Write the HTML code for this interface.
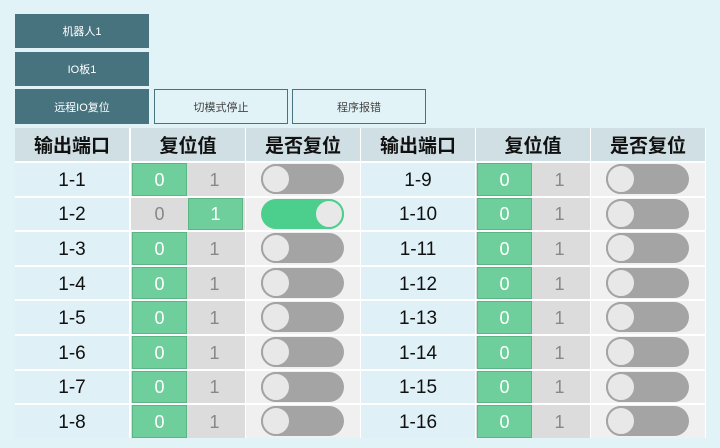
<!DOCTYPE html>
<html><head><meta charset="utf-8"><style>
*{margin:0;padding:0;box-sizing:border-box}
body{width:720px;height:448px;background:#e2f3f8;position:relative;overflow:hidden;font-family:"Liberation Sans","Noto Sans CJK SC",sans-serif}
.b{position:absolute;left:15px;width:134px;height:34px;background:#47737f;color:#fff;font-size:11px;display:flex;align-items:center;justify-content:center}
.o{position:absolute;top:89px;width:134px;height:35px;border:1px solid #47737f;color:#444;font-size:11px;display:flex;align-items:center;justify-content:center}
.wb{position:absolute;left:15px;top:128px;width:691px;height:310px;background:#fff}
.h{position:absolute;top:128px;height:33px;width:114px;background:#d0dfe4;font-size:19px;font-weight:bold;color:#111;display:flex;align-items:center;justify-content:center}
.r{position:absolute;left:15px;width:690px;height:32.5px}
.c{position:absolute;top:0;height:100%;width:114px}
.p{background:#dff1f7;font-size:19px;color:#111;display:flex;align-items:center;justify-content:center;padding-top:3px}
.s{background:#dcdcdc}
.s span{position:absolute;top:0;height:100%;width:55px;display:flex;align-items:center;justify-content:center;font-size:18px;color:#888;padding-top:2px}
.s span.g{background:#6fcf9c;border:1px solid #5bb585;color:#fff}
.t{background:#f0f0f0}
.sw{position:absolute;left:15px;top:1px;width:83px;height:30px;border-radius:15px;background:#a4a4a4}
.sw i{position:absolute;left:0;top:0;width:30px;height:30px;border-radius:50%;background:#e8e8e8;border:2px solid #a4a4a4}
.sw.on{background:#4ccf8c}
.sw.on i{left:53px;border-color:#4ccf8c}
</style></head><body>
<div class="b" style="top:14px">机器人1</div>
<div class="b" style="top:52px">IO板1</div>
<div class="b" style="top:89px;height:35px">远程IO复位</div>
<div class="o" style="left:154px">切模式停止</div>
<div class="o" style="left:292px">程序报错</div>
<div class="wb"></div>
<div class="h" style="left:15px">输出端口</div>
<div class="h" style="left:131px">复位值</div>
<div class="h" style="left:246px">是否复位</div>
<div class="h" style="left:361px">输出端口</div>
<div class="h" style="left:476px">复位值</div>
<div class="h" style="left:591px">是否复位</div>

<div class="r" style="top:163px"><div class="c p" style="left:0">1-1</div><div class="c s" style="left:116px"><span class="g" style="left:1px">0</span><span style="left:56px">1</span></div><div class="c t" style="left:231px"><div class="sw"><i></i></div></div><div class="c p" style="left:346px">1-9</div><div class="c s" style="left:461px"><span class="g" style="left:1px">0</span><span style="left:56px">1</span></div><div class="c t" style="left:576px"><div class="sw"><i></i></div></div></div>
<div class="r" style="top:197.6px"><div class="c p" style="left:0">1-2</div><div class="c s" style="left:116px"><span style="left:1px">0</span><span class="g" style="left:57px">1</span></div><div class="c t" style="left:231px"><div class="sw on"><i></i></div></div><div class="c p" style="left:346px">1-10</div><div class="c s" style="left:461px"><span class="g" style="left:1px">0</span><span style="left:56px">1</span></div><div class="c t" style="left:576px"><div class="sw"><i></i></div></div></div>
<div class="r" style="top:232.2px"><div class="c p" style="left:0">1-3</div><div class="c s" style="left:116px"><span class="g" style="left:1px">0</span><span style="left:56px">1</span></div><div class="c t" style="left:231px"><div class="sw"><i></i></div></div><div class="c p" style="left:346px">1-11</div><div class="c s" style="left:461px"><span class="g" style="left:1px">0</span><span style="left:56px">1</span></div><div class="c t" style="left:576px"><div class="sw"><i></i></div></div></div>
<div class="r" style="top:266.8px"><div class="c p" style="left:0">1-4</div><div class="c s" style="left:116px"><span class="g" style="left:1px">0</span><span style="left:56px">1</span></div><div class="c t" style="left:231px"><div class="sw"><i></i></div></div><div class="c p" style="left:346px">1-12</div><div class="c s" style="left:461px"><span class="g" style="left:1px">0</span><span style="left:56px">1</span></div><div class="c t" style="left:576px"><div class="sw"><i></i></div></div></div>
<div class="r" style="top:301.4px"><div class="c p" style="left:0">1-5</div><div class="c s" style="left:116px"><span class="g" style="left:1px">0</span><span style="left:56px">1</span></div><div class="c t" style="left:231px"><div class="sw"><i></i></div></div><div class="c p" style="left:346px">1-13</div><div class="c s" style="left:461px"><span class="g" style="left:1px">0</span><span style="left:56px">1</span></div><div class="c t" style="left:576px"><div class="sw"><i></i></div></div></div>
<div class="r" style="top:336px"><div class="c p" style="left:0">1-6</div><div class="c s" style="left:116px"><span class="g" style="left:1px">0</span><span style="left:56px">1</span></div><div class="c t" style="left:231px"><div class="sw"><i></i></div></div><div class="c p" style="left:346px">1-14</div><div class="c s" style="left:461px"><span class="g" style="left:1px">0</span><span style="left:56px">1</span></div><div class="c t" style="left:576px"><div class="sw"><i></i></div></div></div>
<div class="r" style="top:370.6px"><div class="c p" style="left:0">1-7</div><div class="c s" style="left:116px"><span class="g" style="left:1px">0</span><span style="left:56px">1</span></div><div class="c t" style="left:231px"><div class="sw"><i></i></div></div><div class="c p" style="left:346px">1-15</div><div class="c s" style="left:461px"><span class="g" style="left:1px">0</span><span style="left:56px">1</span></div><div class="c t" style="left:576px"><div class="sw"><i></i></div></div></div>
<div class="r" style="top:405.2px"><div class="c p" style="left:0">1-8</div><div class="c s" style="left:116px"><span class="g" style="left:1px">0</span><span style="left:56px">1</span></div><div class="c t" style="left:231px"><div class="sw"><i></i></div></div><div class="c p" style="left:346px">1-16</div><div class="c s" style="left:461px"><span class="g" style="left:1px">0</span><span style="left:56px">1</span></div><div class="c t" style="left:576px"><div class="sw"><i></i></div></div></div>
</body></html>
